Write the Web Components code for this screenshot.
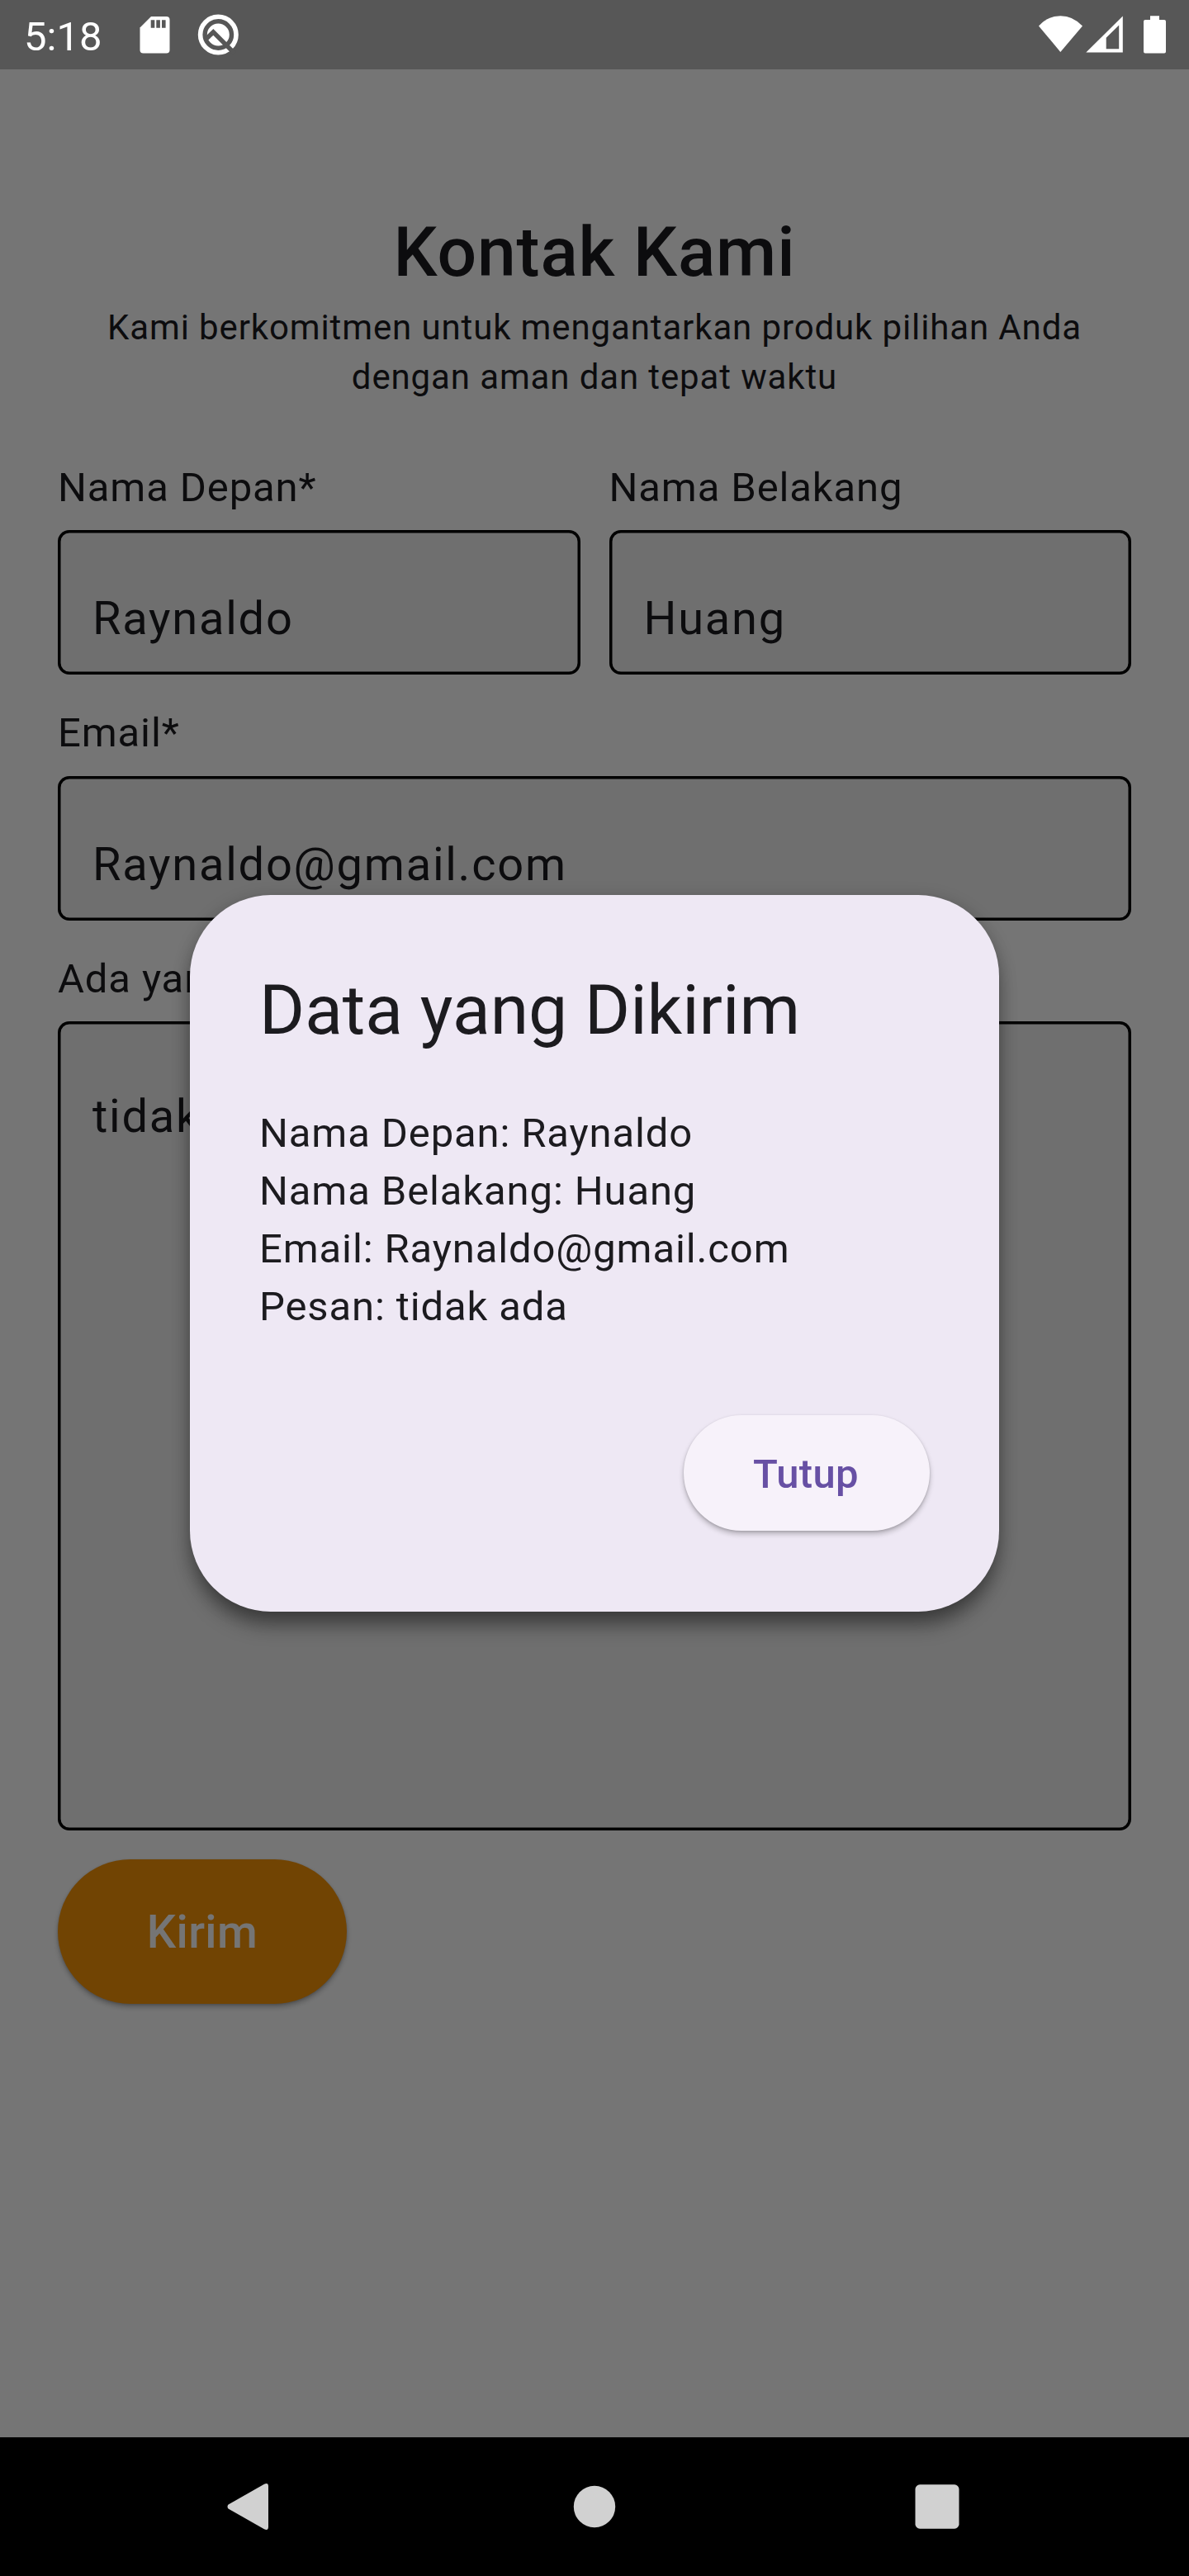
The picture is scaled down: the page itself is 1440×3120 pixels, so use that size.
<!DOCTYPE html>
<html lang="id">
<head>
<meta charset="utf-8">
<title>Kontak Kami</title>
<style>
  html, body { margin: 0; padding: 0; }
  body { width: 1440px; height: 3120px; overflow: hidden; font-family: Roboto, sans-serif; color: #1c1b1f; }
</style>
</head>
<body>
<contact-app></contact-app>
<script>
const define = (name, html) => customElements.define(name, class extends HTMLElement {
  constructor() {
    super();
    const t = document.createElement('template');
    t.innerHTML = html;
    this.attachShadow({ mode: 'open' }).appendChild(t.content.cloneNode(true));
  }
});

define('status-bar', `
<style>
  :host { display: flex; justify-content: space-between; height: 84px; background: #bebebe; }
  .side { display: flex; position: relative; z-index: 2; color: #fff; height: 84px; }
  .time { font-size: 49px; line-height: 58px; padding: 16px 0 0 29px; width: 131px; box-sizing: content-box; white-space: nowrap; }
  svg { display: block; fill: #fff; }
</style>
<div class="side">
  <span class="time">5:18</span>
  <svg width="140" height="84" viewBox="160 0 140 84">
    <path d="M183 20H201.500Q205.500 20 205.500 24V60.500Q205.500 64.500 201.500 64.500H173.500Q169.500 64.500 169.500 60.500V33.500Z"/>
    <path fill="#575757" d="M182.700 24.300h4.600v9.400h-4.600zM189.300 24.300h4.600v9.400h-4.600zM196 24.300h4.600v9.400h-4.600z"/>
    <circle cx="264.300" cy="42" r="21.700" fill="none" stroke="#fff" stroke-width="5.600"/>
    <circle cx="264.300" cy="42" r="13.500"/>
    <path d="M248.500 48.300L258.300 38.900L284 64.600" fill="none" stroke="#575757" stroke-width="5.500"/>
  </svg>
</div>
<div class="side">
  <svg width="190" height="84" viewBox="1250 0 190 84">
    <path d="M1284.300 63L1258 31.500Q1269 19.200 1284.300 19.200T1311 31.500Z"/>
    <path fill-rule="evenodd" d="M1315.300 63.500L1359.800 19.500V63.500ZM1339.700 45.700V59.300H1355.200V30.600Z"/>
    <path d="M1393 19.200H1404V24H1410Q1412 24 1412 26V62.500Q1412 64.500 1410 64.500H1387Q1385 64.500 1385 62.500V26Q1385 24 1387 24H1393Z"/>
  </svg>
</div>`);

define('page-heading', `
<style>
  :host { display: flex; flex-direction: column; align-items: center; text-align: center; }
  h1 { margin: 0; font-size: 84px; font-weight: 500; line-height: 120px; letter-spacing: .875px; }
  p { margin: 1px 0 0; height: 119px; font-size: 42px; line-height: 60px; letter-spacing: .875px; width: 1230px; }
</style>
<h1><slot name="title"></slot></h1>
<p><slot></slot></p>`);

define('form-field', `
<style>
  :host { display: flex; flex-direction: column; flex: 1; }
  label { padding-top: 1px; font-size: 49px; line-height: 70px; letter-spacing: .875px; white-space: nowrap; }
  .box { margin-top: 16.500px; height: var(--h, 175px); box-sizing: border-box; border-radius: 14px;
    background: #f2f2f2; box-shadow: inset 0 0 0 3.500px #000; padding: var(--pt, 67px) 42px 0;
    font-size: 56px; line-height: 80px; letter-spacing: 1.750px; white-space: nowrap; }
</style>
<label><slot name="label"></slot></label>
<div class="box"><slot></slot></div>`);

define('send-button', `
<style>
  :host { display: flex; align-items: center; justify-content: center; width: 350px; height: 175px; border-radius: 87.500px;
    background: #f79408; color: #fff; font-size: 56px; font-weight: 500; letter-spacing: .35px; line-height: 80px;
    box-shadow: 0 4px 6px rgba(0,0,0,.26), 0 1px 3px rgba(0,0,0,.16); }
</style>
<slot></slot>`);

define('close-button', `
<style>
  :host { display: flex; align-items: center; box-sizing: border-box; width: 298px; padding: 3px 0 0 84px; height: 140px; border-radius: 70px;
    background: #f7f2fa; color: #6750a4; font-size: 49px; font-weight: 500; letter-spacing: .35px; line-height: 70px;
    box-shadow: 0 4px 6px rgba(0,0,0,.24), 0 1px 3px rgba(0,0,0,.14); }
</style>
<slot></slot>`);

define('data-dialog', `
<style>
  :host { display: block; box-sizing: border-box; width: 980px; height: 868px; padding: 84px; border-radius: 98px; background: #eee8f4;
    box-shadow: 0 20px 24px -4px rgba(0,0,0,.38), 0 5px 22px rgba(0,0,0,.2); }
  h2 { margin: 0; font-size: 84px; font-weight: 400; line-height: 112px; white-space: nowrap; }
  .body { margin-top: 58px; height: 280px; font-size: 49px; line-height: 70px; letter-spacing: .875px; white-space: nowrap; }
  .actions { display: flex; justify-content: flex-end; margin-top: 96px; }
</style>
<h2><slot name="title"></slot></h2>
<div class="body"><slot></slot></div>
<div class="actions"><slot name="action"></slot></div>`);

define('nav-bar', `
<style>
  :host { display: flex; box-sizing: border-box; align-items: center; height: 168px;
    padding-left: 275px; background: #000; position: relative; z-index: 2; }
  svg { display: block; fill: #d1d1d1; }
  .home { margin: 0 362px 0 368px; }
</style>
<svg width="51" height="58" viewBox="0 0 51 58"><path d="M1.500 26.500L45 1.800Q50 -.5 50 4.500V53.500Q50 58.500 45 56.200L1.500 31.500Q-.5 29 1.500 26.500Z"/></svg>
<svg class="home" width="52" height="52" viewBox="0 0 52 52"><circle cx="26" cy="26" r="25.200"/></svg>
<svg width="54" height="54" viewBox="0 0 54 54"><rect x=".5" y=".3" width="53" height="53.400" rx="5.500"/></svg>`);

define('contact-app', `
<style>
  :host { display: flex; flex-direction: column; width: 1440px; height: 3120px; background: #fff; position: relative; overflow: hidden; }
  main { flex: 1; display: flex; flex-direction: column; padding: 162px 70px 0; }
  .fields { display: flex; flex-direction: column; gap: 35px; margin-top: 68.500px; }
  .row { display: flex; gap: 35px; }
  form-field { flex: 1; }
  .message { --h: 980px; --pt: 75px; }
  send-button { margin-top: 35px; }
  .scrim { position: absolute; inset: 0; z-index: 1; background: rgba(0,0,0,.541); display: flex; align-items: center; justify-content: center; padding: 84px 0 168px; }
  .lines { display: flex; flex-direction: column; }
</style>
<status-bar></status-bar>
<main>
  <page-heading><span slot="title">Kontak Kami</span>Kami berkomitmen untuk mengantarkan produk pilihan Anda dengan aman dan tepat waktu</page-heading>
  <div class="fields">
    <div class="row">
      <form-field><span slot="label">Nama Depan*</span>Raynaldo</form-field>
      <form-field><span slot="label">Nama Belakang</span>Huang</form-field>
    </div>
    <form-field><span slot="label">Email*</span>Raynaldo@gmail.com</form-field>
    <form-field class="message"><span slot="label">Ada yang</span>tidak</form-field>
  </div>
  <send-button>Kirim</send-button>
</main>
<nav-bar></nav-bar>
<div class="scrim">
  <data-dialog>
    <span slot="title">Data yang Dikirim</span>
    <div class="lines"><span>Nama Depan: Raynaldo</span><span>Nama Belakang: Huang</span><span>Email: Raynaldo@gmail.com</span><span>Pesan: tidak ada</span></div>
    <close-button slot="action">Tutup</close-button>
  </data-dialog>
</div>`);
</script>
</body>
</html>
